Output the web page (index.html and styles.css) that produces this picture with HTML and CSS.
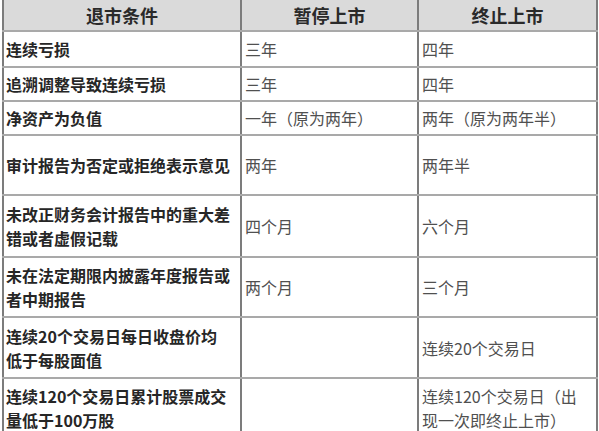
FILE: index.html
```html
<!DOCTYPE html>
<html lang="zh">
<head>
<meta charset="utf-8">
<link rel="stylesheet" href="styles.css">
</head>
<body>
<table class="grid">
  <colgroup>
    <col class="c1">
    <col class="c2">
    <col class="c3">
  </colgroup>
  <thead>
    <tr class="head">
      <th>退市条件</th>
      <th>暂停上市</th>
      <th>终止上市</th>
    </tr>
  </thead>
  <tbody>
    <tr class="h36">
      <td class="cond">连续亏损</td>
      <td>三年</td>
      <td>四年</td>
    </tr>
    <tr class="h34">
      <td class="cond">追溯调整导致连续亏损</td>
      <td>三年</td>
      <td>四年</td>
    </tr>
    <tr class="h34">
      <td class="cond">净资产为负值</td>
      <td>一年（原为两年）</td>
      <td>两年（原为两年半）</td>
    </tr>
    <tr class="h60">
      <td class="cond">审计报告为否定或拒绝表示意见</td>
      <td>两年</td>
      <td>两年半</td>
    </tr>
    <tr class="h62">
      <td class="cond">未改正财务会计报告中的重大差<br>错或者虚假记载</td>
      <td>四个月</td>
      <td>六个月</td>
    </tr>
    <tr class="h60">
      <td class="cond">未在法定期限内披露年度报告或<br>者中期报告</td>
      <td>两个月</td>
      <td>三个月</td>
    </tr>
    <tr class="h61">
      <td class="cond">连续20个交易日每日收盘价均<br>低于每股面值</td>
      <td></td>
      <td>连续20个交易日</td>
    </tr>
    <tr class="h60">
      <td class="cond">连续120个交易日累计股票成交<br>量低于100万股</td>
      <td></td>
      <td>连续120个交易日（出<br>现一次即终止上市）</td>
    </tr>
  </tbody>
</table>
</body>
</html>
```

FILE: styles.css
```css
html, body {
  margin: 0;
  padding: 0;
  background: #ffffff;
}

body {
  padding-left: 2px;
  font-family: "Noto Sans CJK SC", "Noto Sans", sans-serif;
  overflow: hidden;
}

.grid {
  table-layout: fixed;
  border-collapse: collapse;
  width: 594px;
  font-size: 16px;
  line-height: 24px;
  color: #505050;
}

.c1 { width: 238px; }
.c2 { width: 177px; }
.c3 { width: 179px; }

.grid th,
.grid td {
  border-left: 2px solid #7c7c7c;
  border-right: 2px solid #7c7c7c;
  border-bottom: 2px solid #a9a9a9;
  padding: 0 3px;
  vertical-align: middle;
  text-align: left;
}

.head {
  height: 31px;
  background: #dadada;
}

.grid th {
  text-align: center;
  font-size: 18px;
  font-weight: 700;
  color: #2a2a2a;
  padding: 0;
}

.grid td.cond {
  font-weight: 700;
  color: #262626;
  padding-left: 2px;
}

.h34 { height: 34px; }
.h36 { height: 36px; }
.h60 { height: 60px; }
.h61 { height: 61px; }
.h62 { height: 62px; }
```
